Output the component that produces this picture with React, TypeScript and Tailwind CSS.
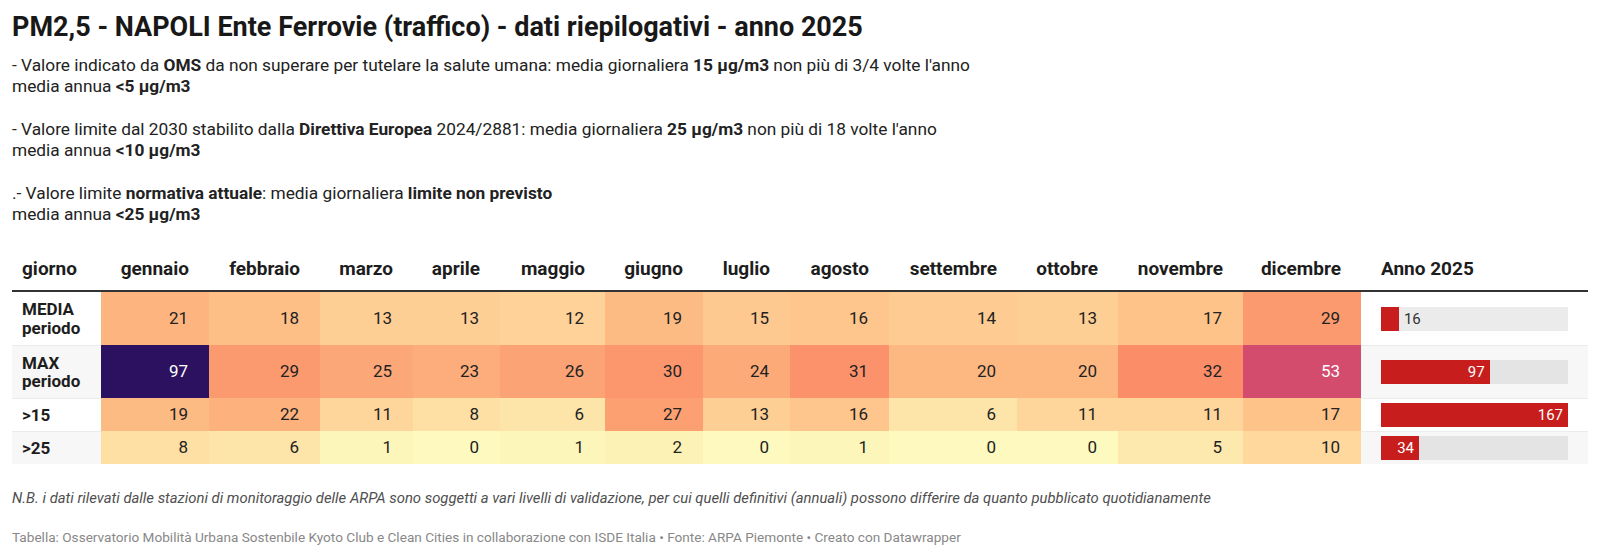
const months = [
  'gennaio',
  'febbraio',
  'marzo',
  'aprile',
  'maggio',
  'giugno',
  'luglio',
  'agosto',
  'settembre',
  'ottobre',
  'novembre',
  'dicembre',
];

// colour scale of the heatmap, one class per value that occurs
const heat: Record<number, string> = {
  0: 'bg-[#fdf9bf]',
  1: 'bg-[#fdf6bb]',
  2: 'bg-[#fdf2b6]',
  5: 'bg-[#fde8ad]',
  6: 'bg-[#fde5aa]',
  8: 'bg-[#fedfa4]',
  10: 'bg-[#fed89d]',
  11: 'bg-[#fed59a]',
  12: 'bg-[#fed298]',
  13: 'bg-[#fecf95]',
  14: 'bg-[#fecc92]',
  15: 'bg-[#fec990]',
  16: 'bg-[#fec68d]',
  17: 'bg-[#fec389]',
  18: 'bg-[#febf87]',
  19: 'bg-[#fdbb84]',
  20: 'bg-[#fdb882]',
  21: 'bg-[#fdb47f]',
  22: 'bg-[#fdb17d]',
  23: 'bg-[#fdad7b]',
  24: 'bg-[#fdaa79]',
  25: 'bg-[#fca777]',
  26: 'bg-[#fca375]',
  27: 'bg-[#fca072]',
  29: 'bg-[#fc9a6f]',
  30: 'bg-[#fb966d]',
  31: 'bg-[#fb926b]',
  32: 'bg-[#fb8e68]',
  53: 'bg-[#d44c6d] text-white',
  97: 'bg-[#2c1160] text-white',
};

const rows = [
  {
    label: ['MEDIA', 'periodo'],
    values: [21, 18, 13, 13, 12, 19, 15, 16, 14, 13, 17, 29],
    total: 16,
    height: 'h-[53px]',
    shade: false,
  },
  {
    label: ['MAX', 'periodo'],
    values: [97, 29, 25, 23, 26, 30, 24, 31, 20, 20, 32, 53],
    total: 97,
    height: 'h-[53px]',
    shade: true,
  },
  {
    label: ['>15'],
    values: [19, 22, 11, 8, 6, 27, 13, 16, 6, 11, 11, 17],
    total: 167,
    height: 'h-[33px]',
    shade: false,
  },
  {
    label: ['>25'],
    values: [8, 6, 1, 0, 1, 2, 0, 1, 0, 0, 5, 10],
    total: 34,
    height: 'h-[33px]',
    shade: true,
  },
];

const maxTotal = 167;

const cols =
  'grid grid-cols-[89px_108px_111px_93px_87px_105px_98px_87px_99px_128px_101px_125px_118px_227px]';

const Bar = ({ value, shade }: { value: number; shade: boolean }) => {
  const pct = (value / maxTotal) * 100;
  const inside = pct > 15;
  return (
    <div
      className={`flex h-[24px] w-[187px] items-center ${shade ? 'bg-[#e4e4e4]' : 'bg-[#ebebeb]'}`}
    >
      <div
        className="flex h-full items-center justify-end bg-[#c71e1d] pr-[5px] text-white"
        style={{ width: `${pct}%` }}
      >
        {inside && value}
      </div>
      {!inside && <span className="pl-[5px] text-[#333]">{value}</span>}
    </div>
  );
};

export default function App() {
  return (
    <div className="min-h-[559px] bg-white px-[12px] pt-[12px] font-['Roboto',sans-serif] text-[#222]">
      <h1 className="text-[27px] leading-[30px] font-bold text-[#181818]">
        PM2,5 - NAPOLI Ente Ferrovie (traffico) - dati riepilogativi - anno 2025
      </h1>

      <div className="mt-[13px] text-[17.3px] leading-[21.3px]">
        <p>
          - Valore indicato da <b>OMS</b> da non superare per tutelare la salute
          umana: media giornaliera <b>15 µg/m3</b> non più di 3/4 volte l'anno
        </p>
        <p>
          media annua <b>&lt;5 µg/m3</b>
        </p>
        <p className="mt-[21.3px]">
          - Valore limite dal 2030 stabilito dalla <b>Direttiva Europea</b>{' '}
          2024/2881: media giornaliera <b>25 µg/m3</b> non più di 18 volte
          l'anno
        </p>
        <p>
          media annua <b>&lt;10 µg/m3</b>
        </p>
        <p className="mt-[21.3px]">
          .- Valore limite <b>normativa attuale</b>: media giornaliera{' '}
          <b>limite non previsto</b>
        </p>
        <p>
          media annua <b>&lt;25 µg/m3</b>
        </p>
      </div>

      <div className="mt-[32px] w-[1576px]">
        <div
          className={`${cols} border-b-2 border-[#333] pb-[10px] text-[19px] leading-[23px] font-bold text-[#1d1d1d]`}
        >
          <div className="pl-[10px]">giorno</div>
          {months.map((m) => (
            <div key={m} className="pr-[20px] text-right">
              {m}
            </div>
          ))}
          <div className="pl-[20px]">Anno 2025</div>
        </div>

        {rows.map((r, i) => (
          <div key={r.label.join(' ')} className={`${cols} ${r.height}`}>
            <div
              className={`flex flex-col justify-center pl-[10px] text-[17px] leading-[18.5px] font-bold text-[#1d1d1d] ${r.shade ? 'bg-[#f7f7f7]' : 'bg-white'} ${i > 0 ? 'border-t border-[#ebebeb]' : ''}`}
            >
              {r.label.map((l) => (
                <span key={l}>{l}</span>
              ))}
            </div>
            {r.values.map((v, j) => (
              <div
                key={months[j]}
                className={`flex items-center justify-end pr-[21px] text-[17px] ${heat[v]}`}
              >
                {v}
              </div>
            ))}
            <div
              className={`flex items-center pl-[20px] text-[15px] ${r.shade ? 'bg-[#f7f7f7]' : 'bg-white'} ${i > 0 ? 'border-t border-[#ebebeb]' : ''}`}
            >
              <Bar value={r.total} shade={r.shade} />
            </div>
          </div>
        ))}
      </div>

      <p className="mt-[24px] text-[14.85px] leading-[20px] text-[#4f4f4f] italic">
        N.B. i dati rilevati dalle stazioni di monitoraggio delle ARPA sono
        soggetti a vari livelli di validazione, per cui quelli definitivi
        (annuali) possono differire da quanto pubblicato quotidianamente
      </p>

      <p className="mt-[20px] text-[13.6px] leading-[18px] text-[#888]">
        Tabella: Osservatorio Mobilità Urbana Sostenbile Kyoto Club e Clean
        Cities in collaborazione con ISDE Italia • Fonte: ARPA Piemonte • Creato
        con Datawrapper
      </p>
    </div>
  );
}
